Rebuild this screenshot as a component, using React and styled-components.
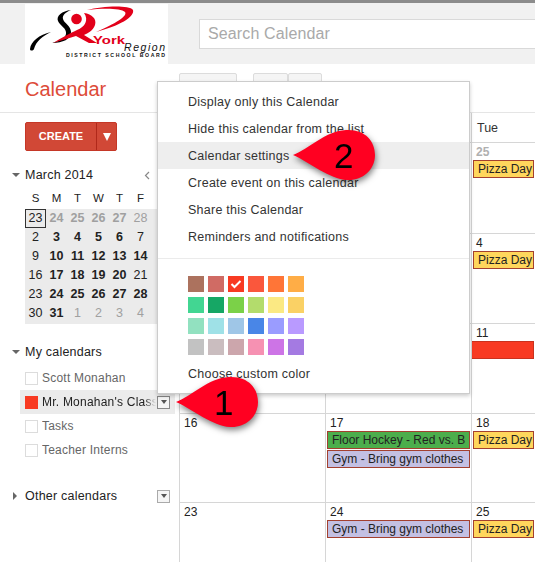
import React from 'react';
import styled, { createGlobalStyle } from 'styled-components';

const GlobalStyle = createGlobalStyle`
  html, body {
    margin: 0;
    padding: 0;
    background: #fff;
    overflow: hidden;
  }
  body {
    font-family: "Liberation Sans", Arial, sans-serif;
    color: #222;
  }
  * {
    box-sizing: border-box;
  }
`;

const swatches = [
  '#ac725e', '#d06b64', '#f83a22', '#fa573c', '#ff7537', '#ffad46',
  '#42d692', '#16a765', '#7bd148', '#b3dc6c', '#fbe983', '#fad165',
  '#92e1c0', '#9fe1e7', '#9fc6e7', '#4986e7', '#9a9cff', '#b99aff',
  '#c2c2c2', '#cabdbf', '#cca6ac', '#f691b2', '#cd74e6', '#a47ae2',
];

const menuItems = [
  'Display only this Calendar',
  'Hide this calendar from the list',
  'Calendar settings',
  'Create event on this calendar',
  'Share this Calendar',
  'Reminders and notifications',
];

const weekDays = ['S', 'M', 'T', 'W', 'T', 'F'];

// label, kind: plain (normal weight), bold, muted (other month)
const miniRows = [
  [['23', 'today'], ['24', 'mutedBold'], ['25', 'mutedBold'], ['26', 'mutedBold'], ['27', 'mutedBold'], ['28', 'muted']],
  [['2'], ['3', 'bold'], ['4', 'bold'], ['5', 'bold'], ['6', 'bold'], ['7']],
  [['9'], ['10', 'bold'], ['11', 'bold'], ['12', 'bold'], ['13', 'bold'], ['14', 'bold']],
  [['16'], ['17', 'bold'], ['18', 'bold'], ['19', 'bold'], ['20', 'bold'], ['21']],
  [['23'], ['24', 'bold'], ['25', 'bold'], ['26', 'bold'], ['27', 'bold'], ['28', 'bold']],
  [['30'], ['31', 'bold'], ['1', 'muted'], ['2', 'muted'], ['3', 'muted'], ['4', 'muted']],
];

const gridRows = [
  [
    { day: '', height: 91 },
    { day: '' },
    { day: '25', muted: true, events: [{ title: 'Pizza Day', kind: 'pizza' }] },
  ],
  [
    { day: '', height: 90 },
    { day: '' },
    { day: '4', events: [{ title: 'Pizza Day', kind: 'pizza' }] },
  ],
  [
    { day: '', height: 90 },
    { day: '' },
    { day: '11', events: [{ title: '', kind: 'red' }] },
  ],
  [
    { day: '16', height: 89 },
    {
      day: '17',
      events: [
        { title: 'Floor Hockey - Red vs. B', kind: 'hockey' },
        { title: 'Gym - Bring gym clothes', kind: 'gym' },
      ],
    },
    { day: '18', events: [{ title: 'Pizza Day', kind: 'pizza' }] },
  ],
  [
    { day: '23', height: 60 },
    { day: '24', events: [{ title: 'Gym - Bring gym clothes', kind: 'gym' }] },
    { day: '25', events: [{ title: 'Pizza Day', kind: 'pizza' }] },
  ],
];

const eventColors = {
  pizza: { bg: '#ffd65c', border: '#a3402f' },
  hockey: { bg: '#4cae4c', border: '#a3402f' },
  gym: { bg: '#c3c0e3', border: '#a3402f' },
  red: { bg: '#f83a22', border: '#c9321e' },
};

const Page = styled.div`
  position: relative;
  width: 535px;
  height: 562px;
  overflow: hidden;
  background: #fff;
`;

const TopBar = styled.header`
  display: flex;
  align-items: flex-start;
  height: 64px;
  padding-left: 25px;
  background: #f1f1f1;
  border-top: 3px solid #8c8c8c;
`;

const LogoBox = styled.div`
  width: 143px;
  height: 60px;
  margin-top: 1px;
  background: #fff;
  flex: none;
`;

const SearchBox = styled.div`
  flex: 1;
  height: 30px;
  margin: 16px 0 0 31px;
  padding-left: 8px;
  background: #fff;
  border: 1px solid #d9d9d9;
  border-right: none;
  font-size: 16px;
  line-height: 27px;
  letter-spacing: 0.13px;
  color: #a9a9a9;
`;

const SubBar = styled.div`
  display: flex;
  height: 49px;
  border-bottom: 1px solid #e5e5e5;
`;

const AppTitle = styled.div`
  width: 179px;
  padding: 13px 0 0 25px;
  font-size: 20px;
  line-height: 24px;
  color: #dd4b39;
`;

const ToolButtons = styled.div`
  display: flex;
  gap: 16px;
  margin-top: 9px;
`;

const ToolGroup = styled.div`
  display: flex;
`;

const ToolButton = styled.div`
  width: ${(p) => p.$w}px;
  height: 30px;
  background: #f5f5f5;
  border: 1px solid #dcdcdc;
  border-radius: 2px;
`;

const Body = styled.div`
  display: flex;
`;

const Sidebar = styled.aside`
  width: 179px;
  flex: none;
  padding-top: 9px;
`;

const CreateSplit = styled.div`
  display: flex;
  width: 92px;
  height: 29px;
  margin-left: 25px;
  background: #d14836;
  border: 1px solid #c53727;
  border-radius: 2px;
`;

const CreateLabel = styled.div`
  width: 71px;
  border-right: 1px solid #b0281a;
  text-align: center;
  font-size: 11px;
  font-weight: bold;
  line-height: 27px;
  color: #fff;
`;

const CreateArrow = styled.div`
  flex: 1;
  display: flex;
  align-items: center;
  justify-content: center;

  &::after {
    content: '';
    border-left: 4px solid transparent;
    border-right: 4px solid transparent;
    border-top: 8px solid #fff;
  }
`;

const SectionHead = styled.div`
  display: flex;
  align-items: center;
  height: 16px;
  margin-top: ${(p) => p.$top}px;
  padding-left: 12px;
  font-size: 12.5px;
  letter-spacing: 0.22px;
  color: #222;
`;

const Caret = styled.span`
  width: 0;
  height: 0;
  margin-right: 5px;
  ${(p) =>
    p.$closed
      ? `border-top: 4px solid transparent;
         border-bottom: 4px solid transparent;
         border-left: 4px solid #666;
         margin-left: 1px;
         margin-right: 8px;`
      : `border-left: 4px solid transparent;
         border-right: 4px solid transparent;
         border-top: 4px solid #666;`}
`;

const MonthPrev = styled.svg`
  margin-left: auto;
  margin-right: 29px;
`;

const MiniHead = styled.div`
  display: grid;
  grid-template-columns: repeat(6, 21px);
  margin: 7px 0 0 25px;
  height: 19px;
  font-size: 11.5px;
  line-height: 16px;
  text-align: center;
  color: #222;
`;

const MiniGrid = styled.div`
  display: grid;
  grid-template-columns: repeat(6, 21px);
  grid-auto-rows: 19px;
  width: 132px;
  margin-left: 25px;
  padding-bottom: 1px;
  height: 115px;
  background: #ebebeb;
`;

const MiniDay = styled.div`
  height: 19px;
  font-size: 12.5px;
  line-height: 19px;
  text-align: center;
  font-weight: ${(p) => (p.$kind === 'bold' || p.$kind === 'mutedBold' ? 'bold' : 'normal')};
  color: ${(p) => (p.$kind === 'muted' || p.$kind === 'mutedBold' ? '#a0a0a0' : '#222')};
  ${(p) => p.$kind === 'today' && `border: 1px solid #333; line-height: 17px;`}
`;

const CalendarList = styled.div`
  display: flex;
  flex-direction: column;
  margin-top: 6px;
`;

const CalendarRow = styled.div`
  display: flex;
  align-items: center;
  width: 155px;
  height: 24px;
  margin-left: 20px;
  padding-left: 5px;
  background: ${(p) => (p.$active ? '#ebebeb' : 'transparent')};
`;

const ColorBox = styled.span`
  width: 13px;
  height: 13px;
  flex: none;
  margin-right: 4px;
  background: ${(p) => p.$color || '#fff'};
  border: 1px solid ${(p) => p.$color || '#dcdcdc'};
`;

const CalendarName = styled.span`
  flex: none;
  width: 114px;
  margin-right: 1px;
  overflow: hidden;
  white-space: nowrap;
  font-size: 12px;
  letter-spacing: 0.22px;
  color: ${(p) => (p.$active ? '#222' : '#666')};
  ${(p) => p.$active && `mask-image: linear-gradient(to right, #000 90%, transparent 100%);`}
`;

const DropBox = styled.span`
  display: flex;
  align-items: center;
  justify-content: center;
  width: 13px;
  height: 13px;
  flex: none;
  background: #f5f5f5;
  border: 1px solid #888;
  ${(p) => p.$light && `border-color: #aaa; margin-left: auto; margin-right: 9px;`}

  &::after {
    content: '';
    border-left: 3px solid transparent;
    border-right: 3px solid transparent;
    border-top: 4px solid #555;
  }
`;

const Grid = styled.main`
  flex: 1;
  display: grid;
  grid-template-columns: 146px 146px 1fr;
  align-content: start;
  border-left: 1px solid #d6d6d6;
`;

const HeadCell = styled.div`
  height: 30px;
  padding-left: 5px;
  border-bottom: 1px solid #d6d6d6;
  ${(p) => !p.$last && `border-right: 1px solid #d6d6d6;`}
  font-size: 12.5px;
  line-height: 31px;
  color: #333;
`;

const DayCell = styled.div`
  height: ${(p) => p.$h}px;
  padding: 2px 0 0 1px;
  border-bottom: 1px solid #d6d6d6;
  ${(p) => !p.$last && `border-right: 1px solid #d6d6d6;`}
  overflow: hidden;
`;

const DayNumber = styled.div`
  height: 14px;
  padding-left: 3px;
  font-size: 12px;
  line-height: 14px;
  font-weight: ${(p) => (p.$muted ? 'bold' : 'normal')};
  color: ${(p) => (p.$muted ? '#b0b0b0' : '#222')};
`;

const EventList = styled.div`
  margin-top: 1px;
`;

const EventChip = styled.div`
  height: 18px;
  margin: 0 1px 1px ${(p) => (p.$kind === 'red' ? '-2px' : '0')};
  padding-left: 4px;
  overflow: hidden;
  white-space: nowrap;
  font-size: 12px;
  line-height: 16px;
  color: #222;
  background: ${(p) => eventColors[p.$kind].bg};
  border: 1px solid ${(p) => eventColors[p.$kind].border};
`;

const Menu = styled.div`
  position: absolute;
  top: 81px;
  left: 157px;
  width: 313px;
  height: 313px;
  padding-top: 6px;
  background: #fff;
  border: 1px solid #ccc;
  box-shadow: 0 2px 4px rgba(0, 0, 0, 0.2);
`;

const MenuItem = styled.div`
  height: 27px;
  padding-left: 30px;
  font-size: 12.5px;
  line-height: 29px;
  letter-spacing: 0.25px;
  color: #333;
  background: ${(p) => (p.$hover ? '#eeeeee' : 'transparent')};
`;

const MenuDivider = styled.div`
  height: 1px;
  margin-top: 8px;
  background: #ebebeb;
`;

const SwatchGrid = styled.div`
  display: grid;
  grid-template-columns: repeat(6, 16px);
  grid-auto-rows: 16px;
  column-gap: 4px;
  row-gap: 5px;
  margin: 17px 0 0 30px;
`;

const Swatch = styled.div`
  display: flex;
  align-items: center;
  justify-content: center;
  background: ${(p) => p.$color};
`;

const CustomColor = styled.div`
  margin: 11px 0 0 30px;
  font-size: 12.5px;
  line-height: 16px;
  letter-spacing: 0.25px;
  color: #333;
`;

const Callout = styled.div`
  position: absolute;
  top: ${(p) => p.$top}px;
  left: ${(p) => p.$left}px;
  width: 90px;
  height: 60px;
  filter: drop-shadow(1px 3px 3px rgba(0, 0, 0, 0.5));
`;

const CalloutNumber = styled.span`
  position: absolute;
  top: 8px;
  left: ${(p) => p.$left}px;
  font-size: 35px;
  line-height: 42px;
  color: #000;
`;

const Logo = () => (
  <svg width="143" height="60" viewBox="0 0 143 60">
    <path d="M5 45 C6 37 14 31 26 28 C18 32 11 37 9 45 C8 47 5 47 5 45 Z" fill="#000" />
    <path d="M46 6 C37 7 31 12 33 17 C35 22 42 24 41 30 C40 35 34 37 27 39 C38 39 46 35 46 28 C46 22 39 19 38 15 C37 11 41 8 46 6 Z" fill="#000" />
    <circle cx="51.5" cy="15" r="5.3" fill="#e2001a" />
    <path d="M59 9 C67 10 72 15 70 21 C68 27 63 29 59 31 L72 39 L64 39 L51 32 L28 39 C36 34 46 29 52 26 C60 23 64 16 59 9 Z" fill="#e2001a" />
    <path d="M62 6 C78 2 104 1 108 6 C110 13 94 22 71 28 C90 20 103 12 100 8 C96 4 78 4 62 6 Z" fill="#e2001a" />
    <text x="68" y="39.5" textLength="32" lengthAdjust="spacingAndGlyphs" fontFamily='"Liberation Sans", sans-serif' fontSize="10.5" fontWeight="bold" fill="#e2001a">York</text>
    <text x="99" y="46.5" textLength="41" fontFamily='"Liberation Sans", sans-serif' fontSize="10.5" fontStyle="italic" fill="#111">Region</text>
    <text x="41" y="53" textLength="99" fontFamily='"Liberation Sans", sans-serif' fontSize="5.2" fontWeight="bold" fill="#111">DISTRICT SCHOOL BOARD</text>
  </svg>
);

const Teardrop = () => (
  <svg width="90" height="60" viewBox="0 0 90 60">
    <path
      d="M2 28 C18 22 34 4 55 3 C74 2 84 14 84 28 C84 44 70 54 56 53 C38 52 20 36 2 28 Z"
      fill="#ff0021"
    />
  </svg>
);

const App = () => {
  return (
    <Page>
      <GlobalStyle />
      <TopBar>
        <LogoBox>
          <Logo />
        </LogoBox>
        <SearchBox>Search Calendar</SearchBox>
      </TopBar>

      <SubBar>
        <AppTitle>Calendar</AppTitle>
        <ToolButtons>
          <ToolButton $w={58} />
          <ToolGroup>
            <ToolButton $w={35} />
            <ToolButton $w={34} />
          </ToolGroup>
        </ToolButtons>
      </SubBar>

      <Body>
        <Sidebar>
          <CreateSplit>
            <CreateLabel>CREATE</CreateLabel>
            <CreateArrow />
          </CreateSplit>

          <SectionHead $top={16}>
            <Caret />
            March 2014
            <MonthPrev width="6" height="9" viewBox="0 0 6 9">
              <path d="M5 1 L1.5 4.5 L5 8" fill="none" stroke="#888" strokeWidth="1.2" />
            </MonthPrev>
          </SectionHead>
          <MiniHead>
            {weekDays.map((d, i) => (
              <div key={i}>{d}</div>
            ))}
          </MiniHead>
          <MiniGrid>
            {miniRows.flat().map(([label, kind], i) => (
              <MiniDay key={i} $kind={kind}>{label}</MiniDay>
            ))}
          </MiniGrid>

          <SectionHead $top={20}>
            <Caret />
            My calendars
          </SectionHead>
          <CalendarList>
            <CalendarRow>
              <ColorBox />
              <CalendarName>Scott Monahan</CalendarName>
            </CalendarRow>
            <CalendarRow $active>
              <ColorBox $color="#f83a22" />
              <CalendarName $active>Mr. Monahan's Class</CalendarName>
              <DropBox />
            </CalendarRow>
            <CalendarRow>
              <ColorBox />
              <CalendarName>Tasks</CalendarName>
            </CalendarRow>
            <CalendarRow>
              <ColorBox />
              <CalendarName>Teacher Interns</CalendarName>
            </CalendarRow>
          </CalendarList>

          <SectionHead $top={26}>
            <Caret $closed />
            Other calendars
            <DropBox $light />
          </SectionHead>
        </Sidebar>

        <Grid>
          <HeadCell />
          <HeadCell />
          <HeadCell $last>Tue</HeadCell>
          {gridRows.map((row, r) =>
            row.map((cell, c) => (
              <DayCell key={`${r}-${c}`} $h={row[0].height} $last={c === 2}>
                <DayNumber $muted={cell.muted}>{cell.day}</DayNumber>
                {cell.events && (
                  <EventList>
                    {cell.events.map((ev, i) => (
                      <EventChip key={i} $kind={ev.kind}>{ev.title}</EventChip>
                    ))}
                  </EventList>
                )}
              </DayCell>
            ))
          )}
        </Grid>
      </Body>

      <Menu>
        {menuItems.map((item) => (
          <MenuItem key={item} $hover={item === 'Calendar settings'}>{item}</MenuItem>
        ))}
        <MenuDivider />
        <SwatchGrid>
          {swatches.map((color, i) => (
            <Swatch key={color} $color={color}>
              {i === 2 && (
                <svg width="12" height="10" viewBox="0 0 12 10">
                  <path d="M1.5 5 L4.5 8 L10.5 2" fill="none" stroke="#fff" strokeWidth="2" />
                </svg>
              )}
            </Swatch>
          ))}
        </SwatchGrid>
        <CustomColor>Choose custom color</CustomColor>
      </Menu>

      <Callout $top={374} $left={174}>
        <Teardrop />
        <CalloutNumber $left={40}>1</CalloutNumber>
      </Callout>
      <Callout $top={127} $left={291}>
        <Teardrop />
        <CalloutNumber $left={43}>2</CalloutNumber>
      </Callout>
    </Page>
  );
};

export default App;
